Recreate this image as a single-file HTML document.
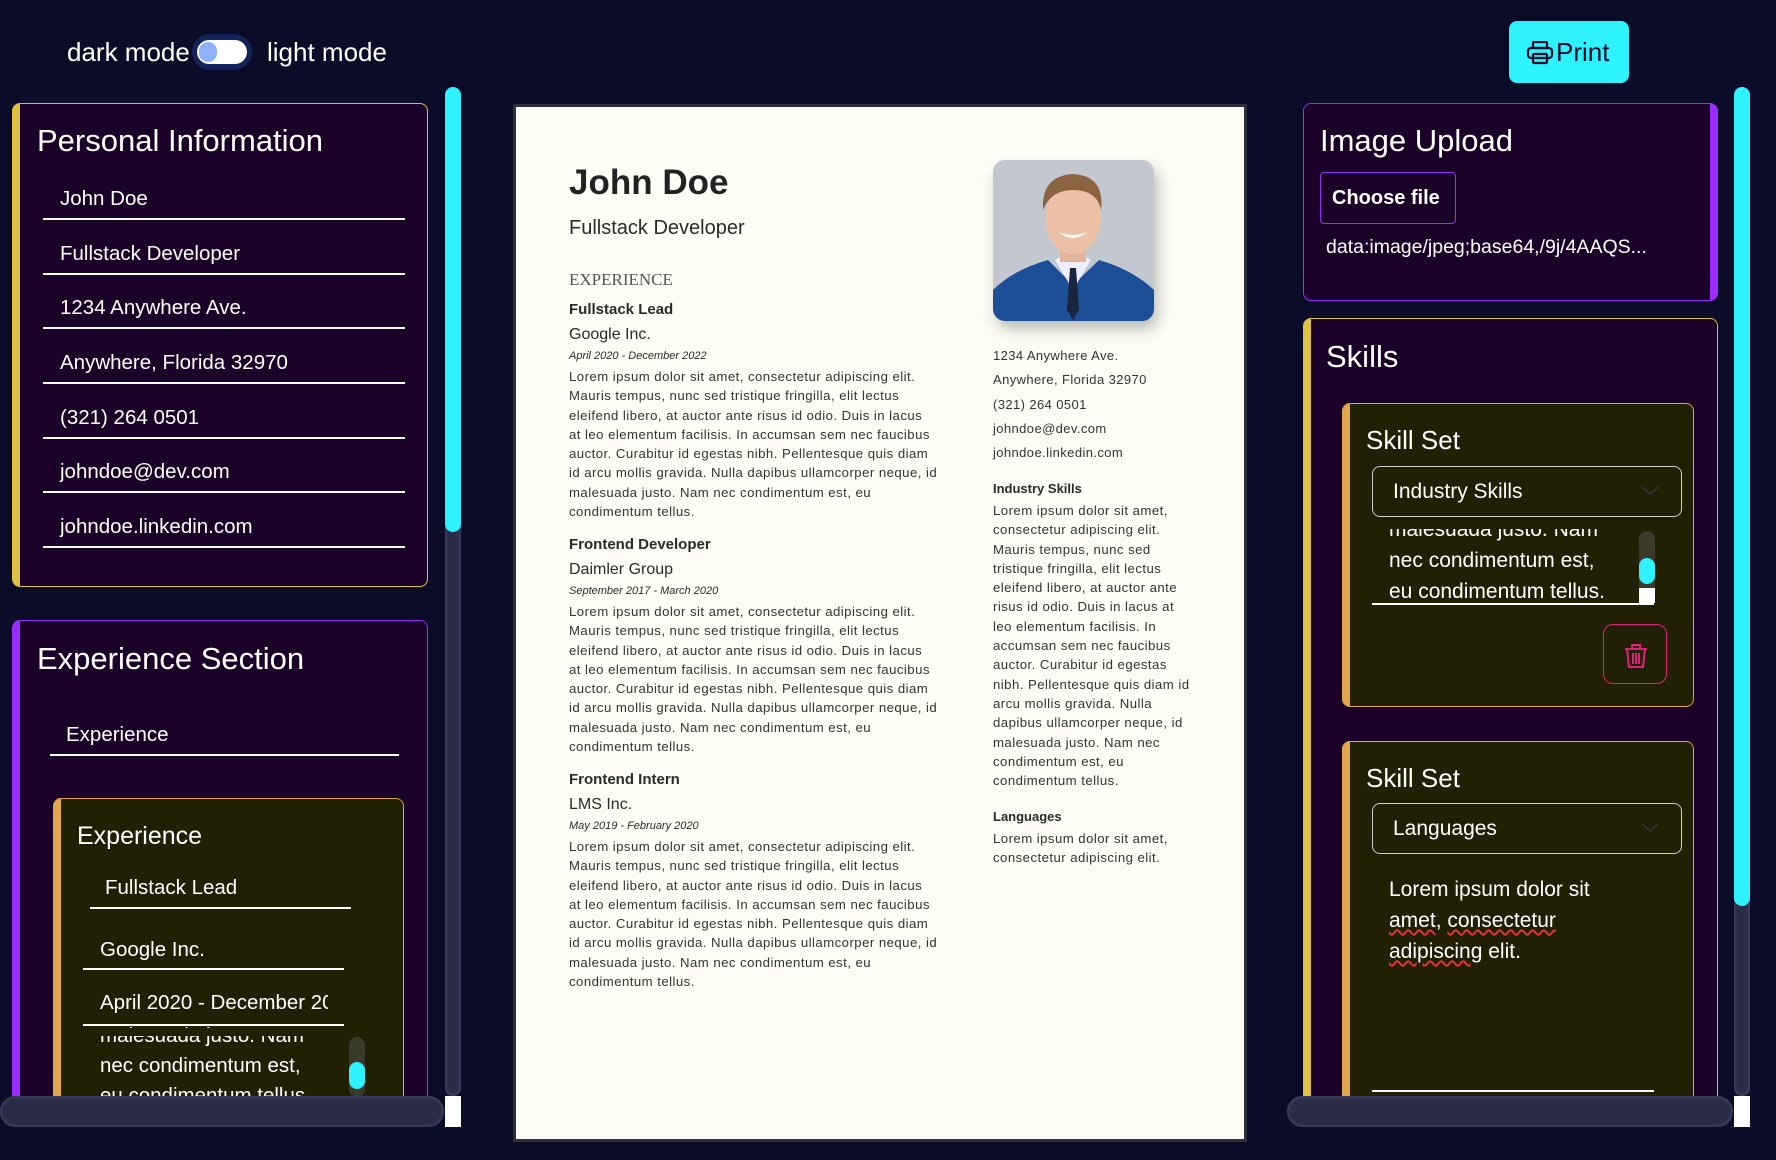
<!DOCTYPE html>
<html><head><meta charset="utf-8">
<style>
*{box-sizing:border-box;margin:0;padding:0}
body{width:1776px;height:1160px;background:#0b0d28;font-family:"Liberation Sans",sans-serif;color:#fff;position:relative;overflow:hidden}
.a{position:absolute}
.panel{position:absolute;background:#1b0229;border-radius:8px}
.inp{position:absolute;font-size:20.5px;color:#fff;white-space:nowrap}
.ul{position:absolute;height:2px;background:#fff}
.r{position:absolute;color:#2a2a2a;white-space:nowrap}
.p{font-size:13.2px;letter-spacing:0.45px;line-height:19.3px;color:#333;white-space:nowrap}
.sb{position:absolute;border-radius:9px;background:#2a2c45;box-shadow:inset 0 0 4px #555a80}
</style></head><body>

<div class="a" style="left:67px;top:37px;font-size:26px">dark mode</div>
<div class="a" style="left:192px;top:34px;width:60px;height:36px;border-radius:18px;background:#13235a"></div>
<div class="a" style="left:197px;top:40px;width:50px;height:24px;border-radius:12px;background:#fff"></div>
<div class="a" style="left:199px;top:42px;width:18px;height:20px;border-radius:10px;background:#8fb0ff"></div>
<div class="a" style="left:267px;top:37px;font-size:26px">light mode</div>

<div class="a" style="left:1509px;top:21px;width:120px;height:62px;border-radius:8px;background:#2ef2ff;color:#0b0d28;font-size:26px">
<svg class="a" style="left:17px;top:20px" width="28" height="24" viewBox="0 0 28 24" fill="none" stroke="#0b0d28" stroke-width="2.2"><rect x="7" y="1" width="14" height="6" rx="1"/><rect x="2" y="7" width="24" height="10" rx="3"/><rect x="7" y="13" width="14" height="9" rx="1"/></svg>
<span class="a" style="left:47px;top:16px">Print</span></div>

<div class="a" style="left:0;top:0;width:440px;height:1096px;overflow:hidden">
 <div class="panel" style="left:12px;top:103px;width:416px;height:484px;border:1px solid #e0c040;border-left:8px solid #e0c040"></div>
 <div class="a" style="left:37px;top:123px;font-size:31px">Personal Information</div>
 <div class="inp" style="left:60px;top:187px">John Doe</div><div class="ul" style="left:43px;top:218px;width:362px"></div>
 <div class="inp" style="left:60px;top:242px">Fullstack Developer</div><div class="ul" style="left:43px;top:273px;width:362px"></div>
 <div class="inp" style="left:60px;top:296px">1234 Anywhere Ave.</div><div class="ul" style="left:43px;top:327px;width:362px"></div>
 <div class="inp" style="left:60px;top:351px">Anywhere, Florida 32970</div><div class="ul" style="left:43px;top:382px;width:362px"></div>
 <div class="inp" style="left:60px;top:406px">(321) 264 0501</div><div class="ul" style="left:43px;top:437px;width:362px"></div>
 <div class="inp" style="left:60px;top:460px">johndoe@dev.com</div><div class="ul" style="left:43px;top:491px;width:362px"></div>
 <div class="inp" style="left:60px;top:515px">johndoe.linkedin.com</div><div class="ul" style="left:43px;top:546px;width:362px"></div>

 <div class="panel" style="left:12px;top:620px;width:416px;height:520px;border:1px solid #9b2bff;border-left:8px solid #9b2bff"></div>
 <div class="a" style="left:37px;top:641px;font-size:31px">Experience Section</div>
 <div class="inp" style="left:66px;top:723px">Experience</div><div class="ul" style="left:50px;top:754px;width:349px;height:1.5px"></div>
 <div class="a" style="left:53px;top:798px;width:351px;height:400px;background:#222004;border:1px solid #e0a848;border-left:8px solid #e0a848;border-radius:8px"></div>
 <div class="a" style="left:77px;top:822px;font-size:25px">Experience</div>
 <div class="inp" style="left:105px;top:876px">Fullstack Lead</div><div class="ul" style="left:90px;top:907px;width:261px;height:1.5px"></div>
 <div class="inp" style="left:100px;top:938px">Google Inc.</div><div class="ul" style="left:83px;top:968px;width:261px;height:1.5px"></div>
 <div class="inp" style="left:100px;top:991px;width:228px;overflow:hidden">April 2020 - December 2022</div><div class="ul" style="left:83px;top:1024px;width:261px;height:1.5px"></div>
 <div class="inp" style="left:100px;top:1021px;font-size:20.5px;line-height:30px">malesuada justo. Nam<br>nec condimentum est,<br>eu condimentum tellus.</div>
 <div class="a" style="left:83px;top:1028px;width:261px;height:8px;background:#222004"></div>
 <div class="a" style="left:349px;top:1037px;width:16px;height:60px;border-radius:8px;background:#3a3a2a"></div>
 <div class="a" style="left:349px;top:1062px;width:16px;height:27px;border-radius:8px;background:#2ef2ff"></div>
</div>
<div class="sb" style="left:445px;top:87px;width:16px;height:1009px"></div>
<div class="a" style="left:445px;top:87px;width:16px;height:445px;border-radius:8px;background:#2ef2ff"></div>
<div class="sb" style="left:0;top:1096px;width:444px;height:31px;border-radius:16px"></div>
<div class="a" style="left:445px;top:1096px;width:16px;height:31px;background:#fff"></div>

<div class="a" style="left:513px;top:104px;width:734px;height:1038px;background:#fdfdf6;border:3px solid #2d2f3c"></div>
<div class="r" style="left:569px;top:163px;font-size:35px;font-weight:bold;color:#222">John Doe</div>
<div class="r" style="left:569px;top:217px;font-size:20px">Fullstack Developer</div>
<div class="r" style="left:569px;top:270px;font-size:17px;font-family:'Liberation Serif',serif;color:#555">EXPERIENCE</div>
<div class="r" style="left:569px;top:301px;font-size:15px;font-weight:bold">Fullstack Lead</div>
<div class="r" style="left:569px;top:326px;font-size:16px">Google Inc.</div>
<div class="r" style="left:569px;top:350px;font-size:11px;font-style:italic">April 2020 - December 2022</div>
<div class="r p" style="left:569px;top:367px">Lorem ipsum dolor sit amet, consectetur adipiscing elit.<br>Mauris tempus, nunc sed tristique fringilla, elit lectus<br>eleifend libero, at auctor ante risus id odio. Duis in lacus<br>at leo elementum facilisis. In accumsan sem nec faucibus<br>auctor. Curabitur id egestas nibh. Pellentesque quis diam<br>id arcu mollis gravida. Nulla dapibus ullamcorper neque, id<br>malesuada justo. Nam nec condimentum est, eu<br>condimentum tellus.</div>
<div class="r" style="left:569px;top:536px;font-size:15px;font-weight:bold">Frontend Developer</div>
<div class="r" style="left:569px;top:561px;font-size:16px">Daimler Group</div>
<div class="r" style="left:569px;top:585px;font-size:11px;font-style:italic">September 2017 - March 2020</div>
<div class="r p" style="left:569px;top:602px">Lorem ipsum dolor sit amet, consectetur adipiscing elit.<br>Mauris tempus, nunc sed tristique fringilla, elit lectus<br>eleifend libero, at auctor ante risus id odio. Duis in lacus<br>at leo elementum facilisis. In accumsan sem nec faucibus<br>auctor. Curabitur id egestas nibh. Pellentesque quis diam<br>id arcu mollis gravida. Nulla dapibus ullamcorper neque, id<br>malesuada justo. Nam nec condimentum est, eu<br>condimentum tellus.</div>
<div class="r" style="left:569px;top:771px;font-size:15px;font-weight:bold">Frontend Intern</div>
<div class="r" style="left:569px;top:796px;font-size:16px">LMS Inc.</div>
<div class="r" style="left:569px;top:820px;font-size:11px;font-style:italic">May 2019 - February 2020</div>
<div class="r p" style="left:569px;top:837px">Lorem ipsum dolor sit amet, consectetur adipiscing elit.<br>Mauris tempus, nunc sed tristique fringilla, elit lectus<br>eleifend libero, at auctor ante risus id odio. Duis in lacus<br>at leo elementum facilisis. In accumsan sem nec faucibus<br>auctor. Curabitur id egestas nibh. Pellentesque quis diam<br>id arcu mollis gravida. Nulla dapibus ullamcorper neque, id<br>malesuada justo. Nam nec condimentum est, eu<br>condimentum tellus.</div>

<svg class="a" style="left:993px;top:160px;border-radius:12px;box-shadow:4px 8px 14px rgba(0,0,0,.25)" width="161" height="161" viewBox="0 0 161 161">
<rect width="161" height="161" fill="#c3c7cf"/>
<path d="M0 161 L0 130 Q20 110 55 100 L80 125 L106 100 Q140 110 161 130 L161 161Z" fill="#1d4f96"/>
<path d="M62 100 L80 130 L98 100 L90 95 L70 95Z" fill="#eef"/>
<path d="M77 108 L83 108 L86 150 L80 160 L74 150Z" fill="#1a2540"/>
<rect x="67" y="78" width="26" height="24" fill="#e2b59a"/>
<ellipse cx="80" cy="58" rx="28" ry="36" fill="#ecc2a6"/>
<path d="M50 50 Q48 16 80 14 Q112 16 108 50 Q104 30 80 30 Q58 30 50 50Z" fill="#8a6440"/>
<path d="M66 72 Q80 84 94 72 Q80 78 66 72Z" fill="#fff"/>
</svg>
<div class="r" style="left:993px;top:344px;font-size:13px;letter-spacing:0.4px;line-height:24.3px;color:#333">1234 Anywhere Ave.<br>Anywhere, Florida 32970<br>(321) 264 0501<br>johndoe@dev.com<br>johndoe.linkedin.com</div>
<div class="r" style="left:993px;top:481px;font-size:13px;font-weight:bold">Industry Skills</div>
<div class="r p" style="left:993px;top:501px">Lorem ipsum dolor sit amet,<br>consectetur adipiscing elit.<br>Mauris tempus, nunc sed<br>tristique fringilla, elit lectus<br>eleifend libero, at auctor ante<br>risus id odio. Duis in lacus at<br>leo elementum facilisis. In<br>accumsan sem nec faucibus<br>auctor. Curabitur id egestas<br>nibh. Pellentesque quis diam id<br>arcu mollis gravida. Nulla<br>dapibus ullamcorper neque, id<br>malesuada justo. Nam nec<br>condimentum est, eu<br>condimentum tellus.</div>
<div class="r" style="left:993px;top:809px;font-size:13px;font-weight:bold">Languages</div>
<div class="r p" style="left:993px;top:829px">Lorem ipsum dolor sit amet,<br>consectetur adipiscing elit.</div>

<div class="a" style="left:1290px;top:0;width:440px;height:1096px;overflow:hidden">
 <div class="panel" style="left:13px;top:103px;width:415px;height:198px;border:1px solid #9b2bff;border-right:8px solid #9b2bff"></div>
 <div class="a" style="left:30px;top:123px;font-size:31px">Image Upload</div>
 <div class="a" style="left:30px;top:172px;width:136px;height:52px;border:1.5px solid #9b2bff;border-radius:4px;font-size:20px;font-weight:bold;padding:14px 0 0 11px">Choose file</div>
 <div class="a" style="left:36px;top:236px;font-size:19.5px;white-space:nowrap">data:image/jpeg;base64,/9j/4AAQS...</div>

 <div class="panel" style="left:13px;top:318px;width:415px;height:900px;border:1px solid #e0c040;border-left:8px solid #e0c040"></div>
 <div class="a" style="left:36px;top:339px;font-size:31px">Skills</div>

 <div class="a" style="left:52px;top:403px;width:352px;height:304px;background:#222004;border:1px solid #e0a848;border-left:8px solid #e0a848;border-radius:8px"></div>
 <div class="a" style="left:76px;top:425px;font-size:26px">Skill Set</div>
 <div class="a" style="left:82px;top:466px;width:310px;height:51px;border:1.5px solid #ccc;border-radius:8px;font-size:21px;padding:13px 0 0 20px">Industry Skills
  <svg class="a" style="right:22px;top:19px" width="18" height="10"><path d="M1 1 L9 8 L17 1" fill="none" stroke="#334" stroke-width="1.5"/></svg></div>
 <div class="a" style="left:99px;top:514px;font-size:21px;line-height:31px;white-space:nowrap">malesuada justo. Nam<br>nec condimentum est,<br>eu condimentum tellus.</div>
 <div class="a" style="left:82px;top:519px;width:290px;height:10px;background:#222004"></div>
 <div class="ul" style="left:82px;top:603px;width:282px;height:1.5px"></div>
 <div class="a" style="left:349px;top:531px;width:16px;height:72px;border-radius:8px;background:#3a3a2a"></div>
 <div class="a" style="left:349px;top:558px;width:16px;height:26px;border-radius:8px;background:#2ef2ff"></div>
 <div class="a" style="left:349px;top:588px;width:16px;height:15px;background:#fff"></div>
 <div class="a" style="left:313px;top:624px;width:64px;height:60px;border:1.5px solid #e0207a;border-radius:10px">
  <svg class="a" style="left:20px;top:18px" width="24" height="26" viewBox="0 0 24 26" fill="none" stroke="#e0207a" stroke-width="2"><path d="M1 6 H23 M8 6 V2 H16 V6 M3 6 L5 24 H19 L21 6 M9 10 V21 M12 10 V21 M15 10 V21"/></svg></div>

 <div class="a" style="left:52px;top:741px;width:352px;height:420px;background:#222004;border:1px solid #e0a848;border-left:8px solid #e0a848;border-radius:8px"></div>
 <div class="a" style="left:76px;top:763px;font-size:26px">Skill Set</div>
 <div class="a" style="left:82px;top:803px;width:310px;height:51px;border:1.5px solid #ccc;border-radius:8px;font-size:21px;padding:13px 0 0 20px">Languages
  <svg class="a" style="right:22px;top:19px" width="18" height="10"><path d="M1 1 L9 8 L17 1" fill="none" stroke="#334" stroke-width="1.5"/></svg></div>
 <div class="a" style="left:99px;top:874px;font-size:21px;line-height:31px;white-space:nowrap">Lorem ipsum dolor sit<br><span style="text-decoration:underline wavy #d33">amet</span>, <span style="text-decoration:underline wavy #d33">consectetur</span><br><span style="text-decoration:underline wavy #d33">adipiscing</span> elit.</div>
 <div class="ul" style="left:82px;top:1090px;width:282px;height:1.5px"></div>
</div>
<div class="sb" style="left:1734px;top:87px;width:16px;height:1009px"></div>
<div class="a" style="left:1734px;top:87px;width:16px;height:819px;border-radius:8px;background:#2ef2ff"></div>
<div class="sb" style="left:1287px;top:1096px;width:446px;height:31px;border-radius:16px"></div>
<div class="a" style="left:1734px;top:1096px;width:16px;height:31px;background:#fff"></div>
</body></html>
